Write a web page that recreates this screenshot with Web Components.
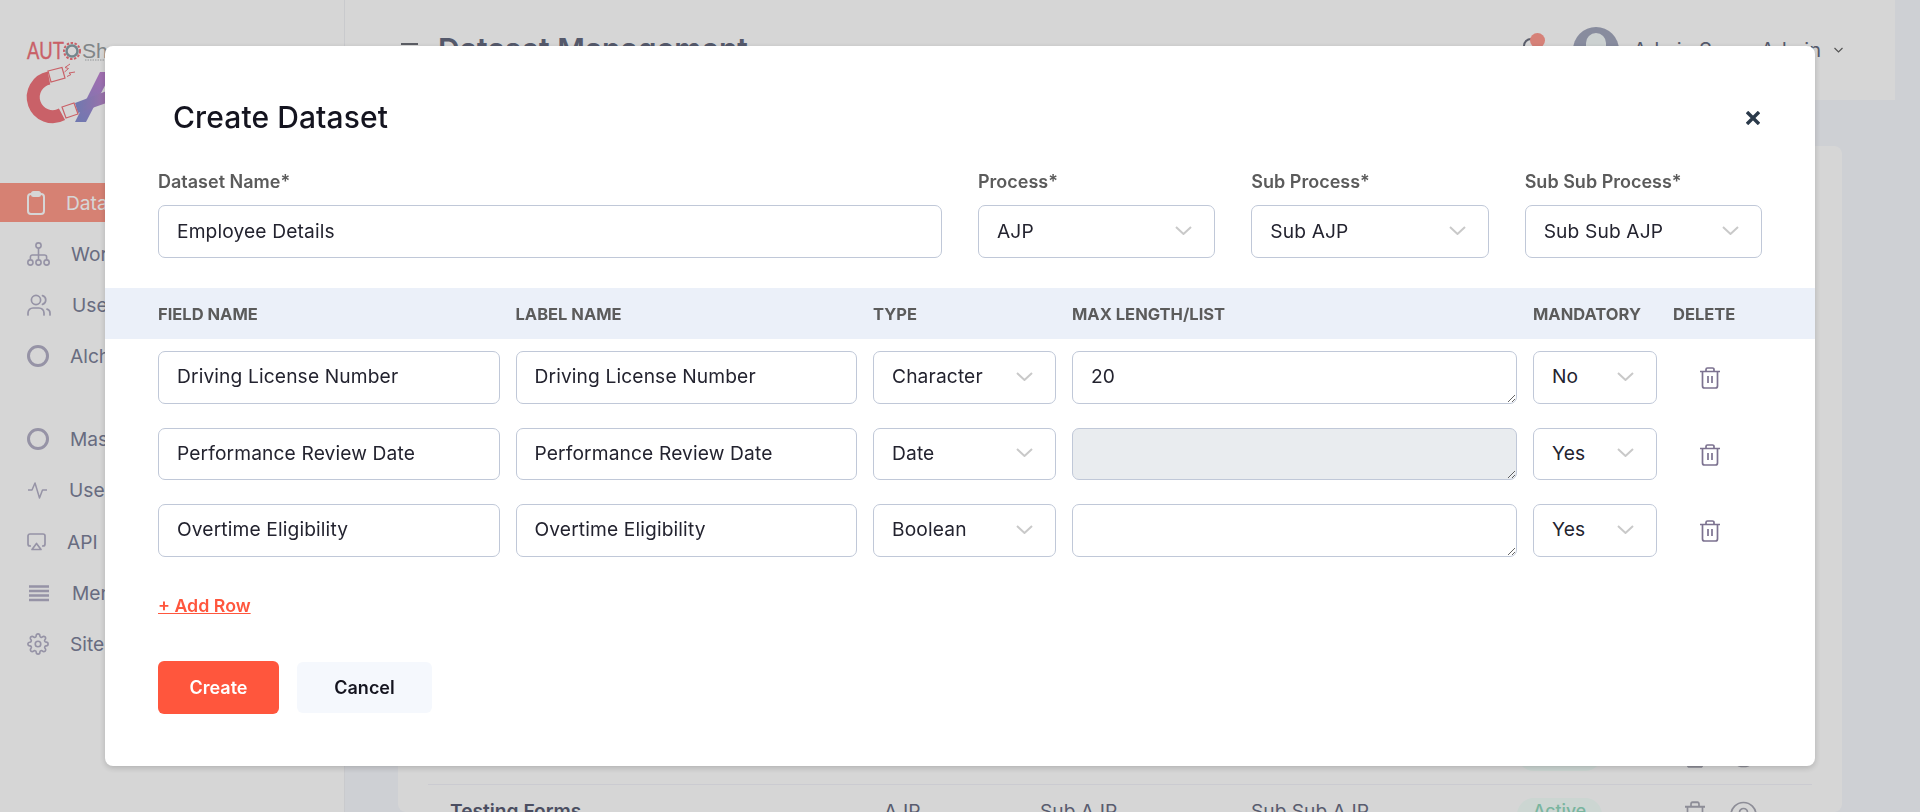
<!DOCTYPE html>
<html lang="en">
<head>
<meta charset="utf-8">
<title>Dataset Management</title>
<style>
  html, body { margin: 0; height: 100%; overflow: hidden; background: #f6f8fd; }
  body { font-family: Inter, "Liberation Sans", sans-serif; }
</style>
</head>
<body>
<app-shell>
  <side-nav slot="side">
    <nav-item icon="clipboard" active>Dataset Management</nav-item>
    <nav-item icon="tree">Workflow</nav-item>
    <nav-item icon="users">Users</nav-item>
    <nav-item icon="ring">Alchemy</nav-item>
    <nav-item icon="ring" class="second">Master</nav-item>
    <nav-item icon="pulse">User Activity</nav-item>
    <nav-item icon="airplay">API</nav-item>
    <nav-item icon="bars">Menu</nav-item>
    <nav-item icon="gear">Site Settings</nav-item>
  </side-nav>
  <top-bar slot="top" heading="Dataset Management" user="Admin Super Admin"></top-bar>
  <list-card slot="main">
    <list-row name="Employee Forms"></list-row>
    <list-row name="Testing Forms"></list-row>
  </list-card>
</app-shell>

<modal-overlay>
  <create-dataset>
    <form-control slot="top" label="Dataset Name*"><text-box>Employee Details</text-box></form-control>
    <form-control slot="top" label="Process*"><select-box>AJP</select-box></form-control>
    <form-control slot="top" label="Sub Process*"><select-box>Sub AJP</select-box></form-control>
    <form-control slot="top" label="Sub Sub Process*"><select-box>Sub Sub AJP</select-box></form-control>

    <field-row>
      <text-box>Driving License Number</text-box>
      <text-box>Driving License Number</text-box>
      <select-box>Character</select-box>
      <area-box value="20"></area-box>
      <select-box>No</select-box>
      <trash-button></trash-button>
    </field-row>
    <field-row>
      <text-box>Performance Review Date</text-box>
      <text-box>Performance Review Date</text-box>
      <select-box>Date</select-box>
      <area-box disabled></area-box>
      <select-box>Yes</select-box>
      <trash-button></trash-button>
    </field-row>
    <field-row>
      <text-box>Overtime Eligibility</text-box>
      <text-box>Overtime Eligibility</text-box>
      <select-box>Boolean</select-box>
      <area-box></area-box>
      <select-box>Yes</select-box>
      <trash-button></trash-button>
    </field-row>
  </create-dataset>
</modal-overlay>

<script>
const ICONS = {
  clipboard: '<svg width="18" height="24" viewBox="0 0 18 24" fill="none" stroke="currentColor" stroke-width="2"><rect x="1" y="3" width="16" height="20" rx="3"/><path d="M5 3.5V2.5a1.5 1.5 0 0 1 1.5-1.5h5A1.5 1.5 0 0 1 13 2.5v1a1.5 1.5 0 0 1-1.5 1.5h-5A1.5 1.5 0 0 1 5 3.5z"/></svg>',
  tree: '<svg width="23" height="24" viewBox="0 0 23 24" fill="none" stroke="currentColor" stroke-width="1.6"><circle cx="11.5" cy="3.5" r="2.6"/><circle cx="3.4" cy="20.5" r="2.6"/><circle cx="11.5" cy="20.5" r="2.6"/><circle cx="19.6" cy="20.5" r="2.6"/><path d="M11.5 6v12M3.4 18v-3a2 2 0 0 1 2-2h12.2a2 2 0 0 1 2 2v3"/></svg>',
  users: '<svg width="24" height="22" viewBox="0 0 24 22" fill="none" stroke="currentColor" stroke-width="1.7" stroke-linecap="round"><path d="M17 21v-2a5 5 0 0 0-5-5H6a5 5 0 0 0-5 5v2"/><circle cx="9" cy="6" r="4.6"/><path d="M23 21v-2a4 4 0 0 0-3-3.87"/><path d="M15.5 1.6a4.6 4.6 0 0 1 0 8.8"/></svg>',
  ring: '<svg width="22" height="22" viewBox="0 0 22 22" fill="none" stroke="currentColor" stroke-width="3"><circle cx="11" cy="11" r="9.5"/></svg>',
  pulse: '<svg width="21" height="20" viewBox="0 0 21 20" fill="none" stroke="currentColor" stroke-width="1.5" stroke-linejoin="round"><path d="M1 10h4l3-7 4.500 15 3-8h4.500"/></svg>',
  airplay: '<svg width="19" height="18" viewBox="0 0 19 18" fill="none" stroke="currentColor" stroke-width="1.7" stroke-linejoin="round"><path d="M4 13H3a2 2 0 0 1-2-2V3a2 2 0 0 1 2-2h13a2 2 0 0 1 2 2v8a2 2 0 0 1-2 2h-1"/><path d="M9.500 10.500l4.500 6H5z"/></svg>',
  bars: '<svg width="24" height="18" viewBox="0 0 24 18" fill="none" stroke="currentColor" stroke-width="2.500"><path d="M2 2.500h20M2 7h20M2 11.500h20M2 16h20"/></svg>',
  gear: '<svg width="22" height="22" viewBox="0 0 24 24" fill="none" stroke="currentColor" stroke-width="1.8"><circle cx="12" cy="12" r="3"/><path d="M19.400 15a1.650 1.650 0 0 0 .33 1.820l.06.06a2 2 0 0 1 0 2.830 2 2 0 0 1-2.830 0l-.06-.06a1.650 1.650 0 0 0-1.820-.33 1.650 1.650 0 0 0-1 1.510V21a2 2 0 0 1-2 2 2 2 0 0 1-2-2v-.09A1.650 1.650 0 0 0 9 19.400a1.650 1.650 0 0 0-1.820.33l-.06.06a2 2 0 0 1-2.830 0 2 2 0 0 1 0-2.830l.06-.06a1.650 1.650 0 0 0 .33-1.820 1.650 1.650 0 0 0-1.510-1H3a2 2 0 0 1-2-2 2 2 0 0 1 2-2h.09A1.650 1.650 0 0 0 4.600 9a1.650 1.650 0 0 0-.33-1.820l-.06-.06a2 2 0 0 1 0-2.830 2 2 0 0 1 2.830 0l.06.06a1.650 1.650 0 0 0 1.820.33H9a1.650 1.650 0 0 0 1-1.510V3a2 2 0 0 1 2-2 2 2 0 0 1 2 2v.09a1.650 1.650 0 0 0 1 1.510 1.650 1.650 0 0 0 1.820-.33l.06-.06a2 2 0 0 1 2.830 0 2 2 0 0 1 0 2.830l-.06.06a1.650 1.650 0 0 0-.33 1.820V9a1.650 1.650 0 0 0 1.510 1H21a2 2 0 0 1 2 2 2 2 0 0 1-2 2h-.09a1.650 1.650 0 0 0-1.510 1z"/></svg>',
  trash: '<svg width="20" height="22" viewBox="0 0 20 22" preserveAspectRatio="none" fill="none" stroke="currentColor" stroke-width="1.700"><path d="M0 4.500h20M6 4.500V2.500A1.500 1.500 0 0 1 7.500 1h5A1.500 1.500 0 0 1 14 2.500v2M2.500 4.500v14.500a2 2 0 0 0 2 2h11a2 2 0 0 0 2-2V4.500M8 9v7M12 9v7"/></svg>',
  eye: '<svg width="27" height="28" viewBox="0 0 27 27" fill="none" stroke="currentColor" stroke-width="1.700"><circle cx="13.500" cy="13.500" r="12.500"/><circle cx="13.500" cy="11" r="4"/><path d="M5 22a10 8 0 0 1 17 0"/></svg>',
  chevron: '<svg width="17" height="9" viewBox="0 0 17 9" fill="none" stroke="currentColor" stroke-width="2"><path d="M1 1l7.500 7 7.500-7"/></svg>'
};

class Base extends HTMLElement {
  constructor() {
    super();
    this.shadowDOM = this.attachShadow({mode: "open"});
  }
  connectedCallback() {
    this.render();
  }
}

class AppShell extends Base {
  render() {
    this.shadowDOM.innerHTML = `
    <style>
      :host { display: grid; grid-template-columns: 345px 1fr; height: 812px; overflow: hidden; }
      .right { min-width: 0; }
      .top { display: block; margin-right: 25px; }
    </style>
    <slot name="side"></slot>
    <div class="right">
      <div class="top"><slot name="top"></slot></div>
      <slot name="main"></slot>
    </div>`;
  }
}

class SideNav extends Base {
  render() {
    this.shadowDOM.innerHTML = `
    <style>
      :host { display: block; background: #fff; border-right: 1px solid #f0f1f5; height: 812px; box-sizing: border-box; }
      .logo { display: block; height: 183px; }
      .logo text { font-family: "Liberation Sans", sans-serif; }
      nav { display: flex; flex-direction: column; gap: 12.200px; }
      ::slotted(.second) { margin-top: 32px; }
    </style>
    <svg class="logo" width="344" height="183" viewBox="0 0 344 183">
      <defs>
        <linearGradient id="leg" x1="0" y1="1" x2="0.5" y2="0">
          <stop offset="0" stop-color="#8490d2"/>
          <stop offset="1" stop-color="#be84d2"/>
        </linearGradient>
        <linearGradient id="band" x1="0" y1="0" x2="1" y2="0">
          <stop offset="0" stop-color="#8490d2"/>
          <stop offset="1" stop-color="#c484c8"/>
        </linearGradient>
      </defs>
      <text x="27" y="59" font-size="24" textLength="37" lengthAdjust="spacingAndGlyphs" fill="#f0737b" stroke="#f0737b" stroke-width=".4">AUT</text>
      <g fill="none">
        <circle cx="72" cy="51" r="5.500" stroke="#8aa0a8" stroke-width="2.500"/>
        <circle cx="72" cy="51" r="8" stroke="#f0737b" stroke-width="2" stroke-dasharray="2.500 1.500"/>
      </g>
      <text x="82" y="58" font-size="21" fill="#9a9fa2">Shee</text>
      <path d="M85 60h20" stroke="#b0b4b6" stroke-width="1" stroke-dasharray="1.500 1"/>
      <path d="M75 122 L86 122 L112 72 L100 72 Z" fill="url(#leg)"/>
      <path d="M75 103 L112 89 L112 101 L78 113 Z" fill="url(#band)"/>
      <path d="M49 78 A19.500 19.500 0 1 0 62 114.300" fill="none" stroke="#f0747c" stroke-width="13"/>
      <g fill="#fff" stroke="#f0747c" stroke-width="1.200">
        <path d="M48 71 L62 67.500 L65 78 L51 82 Z"/>
        <path d="M62 107 L74 103 L78 114 L66 118 Z"/>
      </g>
      <path d="M70 64 l-5 3.500 3.500 1 -4 3.500 M75 72 l-6 1 2 1.500 -4 2" fill="none" stroke="#f0747c" stroke-width="1"/>
    </svg>
    <nav><slot></slot></nav>`;
  }
}

class NavItem extends Base {
  render() {
    const active = this.hasAttribute("active");
    this.shadowDOM.innerHTML = `
    <style>
      :host { display: flex; align-items: center; gap: 21px; height: 39px; padding-left: 27px; white-space: nowrap;
        font-size: 19.200px; color: ${active ? "#fff" : "#7c8199"}; background: ${active ? "#ff9a8a" : "transparent"}; }
      .icon { display: flex; color: ${active ? "#fff" : "#b3b0c6"}; }
    </style>
    <span class="icon">${ICONS[this.getAttribute("icon")]}</span>
    <span><slot></slot></span>`;
  }
}

class TopBar extends Base {
  render() {
    this.shadowDOM.innerHTML = `
    <style>
      :host { display: flex; align-items: center; justify-content: space-between; height: 100px; box-sizing: border-box;
        background: #fff; padding: 0 52px 0 56px; color: #666b80; }
      .left { display: flex; align-items: center; gap: 20px; }
      .burger { width: 17px; height: 12px; margin-top: 2px; border-top: 2px solid #6d6f78; border-bottom: 2px solid #6d6f78; }
      h1 { margin: -2px 0 0; font-size: 30px; line-height: 36px; font-weight: 600; }
      .right { display: flex; align-items: center; }
      .bell { position: relative; width: 18px; height: 28px; margin-right: 33px; }
      .bell svg { display: block; }
      .bell i { position: absolute; right: -5px; top: -3px; width: 15px; height: 15px; border-radius: 50%; background: #ff9a90; }
      .avatar { position: relative; width: 46px; height: 46px; border-radius: 50%; background: #a2a7bd; overflow: hidden; margin-right: 14px; }
      .avatar::after { content: ""; position: absolute; left: 13px; top: 6px; width: 20px; height: 24px; border-radius: 10px; background: #f4fafa; }
      .name { font-size: 20px; }
      .chev { display: flex; margin-left: 13px; color: #666; }
    </style>
    <div class="left"><div class="burger"></div><h1>${this.getAttribute("heading")}</h1></div>
    <div class="right">
      <div class="bell">
        <svg width="18" height="28" viewBox="0 0 18 28" fill="none" stroke="#6d7080" stroke-width="2"><path d="M2 22V10a7 7 0 0 1 14 0v12M0 22h18"/></svg>
        <i></i>
      </div>
      <div class="avatar"></div>
      <span class="name">${this.getAttribute("user")}</span>
      <span class="chev"><svg width="9" height="6" viewBox="0 0 9 6" fill="none" stroke="currentColor" stroke-width="1.200"><path d="M.5 1l4 4 4-4"/></svg></span>
    </div>`;
  }
}

class ListCard extends Base {
  render() {
    this.shadowDOM.innerHTML = `
    <style>
      :host { display: block; margin: 46px 78px 0 53px; padding: 578px 30px 0; background: #fff; border-radius: 8px; height: 666px; box-sizing: border-box; }
    </style>
    <slot></slot>`;
  }
}

class ListRow extends Base {
  render() {
    this.shadowDOM.innerHTML = `
    <style>
      :host { display: grid; grid-template-columns: 434px 156px 211px 266px 85px 1fr; align-items: center; height: 60px; box-sizing: border-box;
        padding: 0 0 8px 22px; font-size: 19.200px; color: #6a6e84; }
      :host(:not(:first-child)) { border-top: 1px solid #f2f2fa; }
      b { font-weight: 600; color: #5a5d74; }
      .badge { height: 34px; margin-top: 8px; padding-bottom: 8px; box-sizing: border-box; border-radius: 17px; background: #f3fffb; color: #91d8bd; font-size: 17.600px; font-weight: 500; display: flex; align-items: center; justify-content: center; }
      .acts { display: flex; align-items: center; gap: 25px; padding-left: 83px; margin-top: 8px; color: #a8a8b4; }
      .acts svg { display: block; }
      .acts svg:first-child { height: 28px; }
    </style>
    <b>${this.getAttribute("name")}</b><span>AJP</span><span>Sub AJP</span><span>Sub Sub AJP</span>
    <span class="badge">Active</span>
    <span class="acts">${ICONS.trash}${ICONS.eye}</span>`;
  }
}

class ModalOverlay extends Base {
  render() {
    this.shadowDOM.innerHTML = `
    <style>
      :host { position: fixed; inset: 0; display: flex; align-items: center; justify-content: center; background: rgba(0, 0, 0, .16); }
    </style>
    <slot></slot>`;
  }
}

class CreateDataset extends Base {
  render() {
    const cols = ["FIELD NAME", "LABEL NAME", "TYPE", "MAX LENGTH/LIST", "MANDATORY", "DELETE"];
    this.shadowDOM.innerHTML = `
    <style>
      :host { display: block; width: 1710px; height: 720px; background: #fff; border-radius: 8px; box-shadow: 0 2px 6px rgba(0, 0, 0, .18); color: #1c1c2b; }
      header { display: flex; justify-content: space-between; height: 126px; box-sizing: border-box; padding: 53px 53px 0 68px; }
      h2 { margin: 0; font-size: 30px; line-height: 36px; font-weight: 500; letter-spacing: .1px; color: #14141f; }
      .close { display: flex; margin-top: 12px; margin-right: 2px; height: 14px; color: #2b3a4a; }
      .top { display: grid; grid-template-columns: 784px repeat(3, 237.330px); column-gap: 36px; padding: 0 53px; }
      .band { display: grid; grid-template-columns: 341.500px 341.500px 183px 445px 124px 1fr; column-gap: 16px; align-items: center; height: 51px; margin-top: 30px; padding: 0 53px;
        background: #ebf0f9; color: #5b5b5b; font-size: 16.500px; font-weight: 700; }
      .rows { display: flex; flex-direction: column; gap: 24px; margin: 12px 53px 0; }
      .add { display: block; margin: 39px 53px 0; width: max-content; font-size: 17.800px; line-height: 20px; font-weight: 600; color: #ff563d; text-decoration: underline; }
      .actions { display: flex; align-items: center; gap: 18px; margin: 45px 53px 0; }
      button { font: 600 18px Inter, "Liberation Sans", sans-serif; border: 0; border-radius: 6px; padding: 0; }
      .create { width: 121px; height: 53px; background: #ff563d; color: #fff; }
      .cancel { width: 135px; height: 51px; background: #f5f8fd; color: #14141f; }
    </style>
    <header>
      <h2>Create Dataset</h2>
      <span class="close"><svg width="14" height="14" viewBox="0 0 14 14" fill="none" stroke="currentColor" stroke-width="3.400"><path d="M1 1l12 12M13 1L1 13"/></svg></span>
    </header>
    <div class="top"><slot name="top"></slot></div>
    <div class="band">${cols.map(c => `<span>${c}</span>`).join("")}</div>
    <div class="rows"><slot></slot></div>
    <a class="add">+ Add Row</a>
    <div class="actions">
      <button class="create">Create</button>
      <button class="cancel">Cancel</button>
    </div>`;
  }
}

class FormControl extends Base {
  render() {
    this.shadowDOM.innerHTML = `
    <style>
      :host { display: block; }
      label { display: block; height: 33px; line-height: 20px; font-size: 18px; font-weight: 600; color: #5b5b5b; }
      ::slotted(*) { height: 53px; }
    </style>
    <label>${this.getAttribute("label")}</label>
    <slot></slot>`;
  }
}

class FieldRow extends Base {
  render() {
    this.shadowDOM.innerHTML = `
    <style>
      :host { display: grid; grid-template-columns: 341.500px 341.500px 183px 445px 124px 1fr; grid-template-rows: 52.500px; column-gap: 16px; }
    </style>
    <slot></slot>`;
  }
}

const BOX_CSS = `
  display: flex; align-items: center; box-sizing: border-box; height: 100%; min-width: 0;
  border: 1px solid #c0c8d8; border-radius: 7px; background: #fff;
  padding: 0 18px 2px; font-size: 19.200px; letter-spacing: .13px; color: #23232f; white-space: nowrap;`;

class TextBox extends Base {
  render() {
    this.shadowDOM.innerHTML = `
    <style>:host { ${BOX_CSS} }</style>
    <slot></slot>`;
  }
}

class SelectBox extends Base {
  render() {
    this.shadowDOM.innerHTML = `
    <style>
      :host { ${BOX_CSS} justify-content: space-between; padding-right: 22px; }
      span { display: flex; color: #c9c9c9; }
    </style>
    <slot></slot>
    <span>${ICONS.chevron}</span>`;
  }
}

class AreaBox extends Base {
  render() {
    const off = this.hasAttribute("disabled");
    this.shadowDOM.innerHTML = `
    <style>
      :host { display: block; min-width: 0; height: 100%; }
      textarea { display: block; box-sizing: border-box; width: 100%; height: 100%; margin: 0; resize: both;
        border: 1px solid #c0c8d8; border-radius: 7px; padding: 11px 18px; outline: 0;
        font: 19.200px/26px Inter, "Liberation Sans", sans-serif; letter-spacing: .13px; color: #23232f; background: ${off ? "#e9ecef" : "#fff"}; }
    </style>
    <textarea ${off ? "disabled" : ""}>${this.getAttribute("value") || ""}</textarea>`;
  }
}

class TrashButton extends Base {
  render() {
    this.shadowDOM.innerHTML = `
    <style>
      :host { display: flex; justify-content: flex-start; padding: 16px 0 0 27px; color: #7c7290; }
      svg { display: block; }
    </style>
    ${ICONS.trash}`;
  }
}

customElements.define("app-shell", AppShell);
customElements.define("side-nav", SideNav);
customElements.define("nav-item", NavItem);
customElements.define("top-bar", TopBar);
customElements.define("list-card", ListCard);
customElements.define("list-row", ListRow);
customElements.define("modal-overlay", ModalOverlay);
customElements.define("create-dataset", CreateDataset);
customElements.define("form-control", FormControl);
customElements.define("field-row", FieldRow);
customElements.define("text-box", TextBox);
customElements.define("select-box", SelectBox);
customElements.define("area-box", AreaBox);
customElements.define("trash-button", TrashButton);
</script>
</body>
</html>
